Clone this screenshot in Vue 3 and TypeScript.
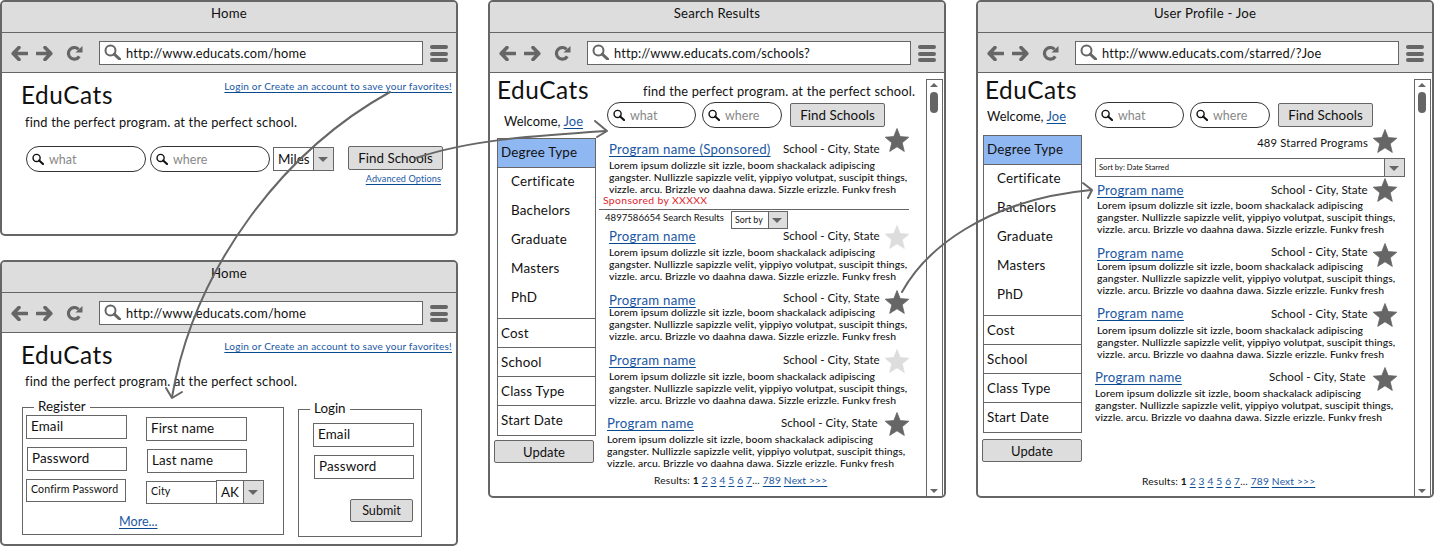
<script setup lang="ts">
interface Result { gap: number; dx: number; textGap: number; schoolDy: number; starDy: number; on: boolean }

const lorem = [
  'Lorem ipsum dolizzle sit izzle, boom shackalack adipiscing',
  'gangster. Nullizzle sapizzle velit, yippiyo volutpat, suscipit things,',
  'vizzle. arcu. Brizzle vo daahna dawa. Sizzle erizzle. Funky fresh',
]

const searchResults: Result[] = [
  { gap: -1, dx: 0, textGap: 2, schoolDy: 0, starDy: 1, on: false },
  { gap: 10, dx: 0, textGap: -2, schoolDy: -2, starDy: 2, on: true },
  { gap: 10, dx: 0, textGap: 2, schoolDy: 0, starDy: 1, on: false },
  { gap: 9, dx: -2, textGap: 2, schoolDy: 0, starDy: 1, on: true },
]
const starred: Result[] = [
  { gap: 5, dx: 0, textGap: 1, schoolDy: 0, starDy: 0, on: true },
  { gap: 10, dx: 0, textGap: -1, schoolDy: -1, starDy: 2, on: true },
  { gap: 9, dx: 0, textGap: 3, schoolDy: 1, starDy: 2, on: true },
  { gap: 9, dx: -2, textGap: 2, schoolDy: 0, starDy: 2, on: true },
]
const degrees = ['Certificate', 'Bachelors', 'Graduate', 'Masters', 'PhD']
const filters = ['Cost', 'School', 'Class Type', 'Start Date']
const pages = ['2', '3', '4', '5', '6', '7']

const homes = [
  { key: 'w1', url: 'http://www.educats.com/home' },
  { key: 'w2', url: 'http://www.educats.com/home' },
]
const lists = [
  { key: 'w3', title: 'Search Results', url: 'http://www.educats.com/schools?', profile: false, items: searchResults },
  { key: 'w4', title: 'User Profile - Joe', url: 'http://www.educats.com/starred/?Joe', profile: true, items: starred },
]
</script>

<template>
  <div class="canvas">
    <svg class="defs" width="0" height="0" aria-hidden="true">
      <defs>
        <symbol id="back" viewBox="0 0 17 15"><path d="M8 1.5 2.2 7.5 8 13.5M2.5 7.5H16" fill="none" stroke="#666" stroke-width="3.6" stroke-linejoin="round" stroke-linecap="round" /></symbol>
        <symbol id="fwd" viewBox="0 0 17 15"><path d="M9 1.5 14.8 7.5 9 13.5M14.5 7.5H1" fill="none" stroke="#666" stroke-width="3.6" stroke-linejoin="round" stroke-linecap="round" /></symbol>
        <symbol id="reload" viewBox="0 0 17 16"><path d="M13.6 11A6.2 6.2 0 1 1 12.8 3.6" fill="none" stroke="#666" stroke-width="3.4" /><path d="M9.5 7H17V0Z" fill="#666" /></symbol>
        <symbol id="mag" viewBox="0 0 17 16"><circle cx="6.5" cy="6.5" r="5" fill="none" stroke="currentColor" stroke-width="2" /><path d="M10.2 10.2 15.6 15" fill="none" stroke="currentColor" stroke-width="3" stroke-linecap="round" /></symbol>
        <symbol id="star" viewBox="0 0 24 24"><path d="M12 .5 15.2 8.6 23.8 9.2 17.2 14.8 19.3 23.4 12 18.8 4.7 23.4 6.8 14.8.2 9.2 8.8 8.6Z" fill="currentColor" stroke="currentColor" stroke-width=".8" stroke-linejoin="round" /></symbol>
      </defs>
    </svg>

    <section v-for="h in homes" :key="h.key" class="win" :class="h.key">
      <header class="title">Home</header>
      <div class="toolbar">
        <svg class="nav"><use href="#back" /></svg>
        <svg class="nav n2"><use href="#fwd" /></svg>
        <svg class="nav n3"><use href="#reload" /></svg>
        <div class="address"><svg class="addr-mag"><use href="#mag" /></svg><span>{{ h.url }}</span></div>
        <div class="burger"><i></i><i></i><i></i></div>
      </div>
      <div class="home">
        <div class="home-top">
          <h1 class="logo">EduCats</h1>
          <a class="link tiny">Login or Create an account to save your favorites!</a>
        </div>
        <p class="tag home-tag">find the perfect program. at the perfect school.</p>

        <div v-if="h.key === 'w1'" class="home-search">
          <div class="pill p120"><svg class="pill-mag"><use href="#mag" /></svg>what</div>
          <div class="pill p120 s3"><svg class="pill-mag"><use href="#mag" /></svg>where</div>
          <div class="select miles"><span>Miles</span><b class="drop"></b></div>
          <div class="find-col">
            <button class="btn find">Find Schools</button>
            <a class="link adv">Advanced Options</a>
          </div>
        </div>

        <div v-else class="forms">
          <div class="fieldset register">
            <span class="legend">Register</span>
            <div class="cols">
              <div class="col">
                <div class="field">Email</div>
                <div class="field f2">Password</div>
                <div class="field f3 small">Confirm Password</div>
              </div>
              <div class="col col-b">
                <div class="field">First name</div>
                <div class="field f2">Last name</div>
                <div class="city">
                  <div class="field small cityf">City</div>
                  <div class="select ak"><span>AK</span><b class="drop"></b></div>
                </div>
              </div>
            </div>
            <a class="link more">More...</a>
          </div>
          <div class="fieldset login">
            <span class="legend">Login</span>
            <div class="field">Email</div>
            <div class="field f2">Password</div>
            <button class="btn submit">Submit</button>
          </div>
        </div>
      </div>
    </section>

    <section v-for="l in lists" :key="l.key" class="win tall" :class="l.key">
      <header class="title">{{ l.title }}</header>
      <div class="toolbar">
        <svg class="nav"><use href="#back" /></svg>
        <svg class="nav n2"><use href="#fwd" /></svg>
        <svg class="nav n3"><use href="#reload" /></svg>
        <div class="address"><svg class="addr-mag"><use href="#mag" /></svg><span>{{ l.url }}</span></div>
        <div class="burger"><i></i><i></i><i></i></div>
      </div>
      <div class="body">
        <div class="page">
          <div class="page-top">
            <h1 class="logo">EduCats</h1>
            <p v-if="!l.profile" class="tag page-tag">find the perfect program. at the perfect school.</p>
          </div>
          <div class="columns">
            <aside class="side">
              <div class="welcome">Welcome, <a class="link">Joe</a></div>
              <div class="panel">
                <div class="panel-head">Degree Type</div>
                <div class="panel-list"><div v-for="d in degrees" :key="d" class="panel-item">{{ d }}</div></div>
                <div v-for="f in filters" :key="f" class="panel-row">{{ f }}</div>
              </div>
              <button class="btn update">Update</button>
            </aside>
            <main class="main">
              <div class="search">
                <div class="pill p89"><svg class="pill-mag"><use href="#mag" /></svg>what</div>
                <div class="pill p80"><svg class="pill-mag"><use href="#mag" /></svg>where</div>
                <button class="btn find">Find Schools</button>
              </div>

              <template v-if="!l.profile">
                <article class="result sponsored">
                  <div class="head">
                    <a class="link pname">Program name (Sponsored)</a>
                    <span class="school">School - City, State</span>
                    <svg class="star dark up"><use href="#star" /></svg>
                  </div>
                  <div class="lorem"><div v-for="t in lorem" :key="t">{{ t }}</div></div>
                </article>
                <div class="sponsor">Sponsored by XXXXX</div>
                <hr class="rule" />
                <div class="count">
                  <span>4897586654 Search Results</span>
                  <div class="select sort"><span>Sort by</span><b class="drop"></b></div>
                </div>
                <article class="result first-light">
                  <div class="head">
                    <a class="link pname">Program name</a>
                    <span class="school">School - City, State</span>
                    <svg class="star light"><use href="#star" /></svg>
                  </div>
                  <div class="lorem"><div v-for="t in lorem" :key="t">{{ t }}</div></div>
                </article>
              </template>
              <template v-else>
                <div class="starred-count"><span>489 Starred Programs</span><svg class="star dark"><use href="#star" /></svg></div>
                <div class="select wide"><span>Sort by: Date Starred</span><b class="drop"></b></div>
              </template>

              <article
                v-for="(r, i) in l.items.slice(l.profile ? 0 : 1)"
                :key="i"
                class="result"
                :style="{ marginTop: r.gap + 'px', marginLeft: 10 + r.dx + 'px' }"
              >
                <div class="head">
                  <a class="link pname">Program name</a>
                  <span class="school" :style="{ transform: `translateY(${r.schoolDy}px)` }">School - City, State</span>
                  <svg
                    class="star"
                    :class="r.on ? 'dark' : 'light'"
                    :style="{ transform: `translate(${-r.dx}px, ${r.starDy}px)` }"
                  ><use href="#star" /></svg>
                </div>
                <div class="lorem" :style="{ marginTop: r.textGap + 'px' }"><div v-for="t in lorem" :key="t">{{ t }}</div></div>
              </article>

              <div class="pager" :class="{ 'pager-low': l.profile }">
                Results: <b>1</b>
                <template v-for="p in pages" :key="p">{{ ' ' }}<a class="link">{{ p }}</a></template>... <a class="link">789</a> <a class="link">Next &gt;&gt;&gt;</a>
              </div>
            </main>
          </div>
        </div>
        <div class="scroll">
          <i class="up-tri"></i>
          <i class="thumb"></i>
          <i class="down-tri"></i>
        </div>
      </div>
    </section>

    <svg class="arrows" width="1434" height="546" viewBox="0 0 1434 546" aria-hidden="true">
      <g fill="none" stroke="#666" stroke-width="2" stroke-linecap="round" stroke-linejoin="round">
        <path d="M390 92C285 150 195 265 172 397" />
        <path d="M166 388 172 398 182 392" />
        <path d="M416 158C470 140 530 136 606 131" />
        <path d="M595 121 607 131 597 137" />
        <path d="M902 292C925 250 985 200 1091 190" />
        <path d="M1083 183 1092 190 1088 198" />
      </g>
    </svg>
  </div>
</template>

<style>
html, body { margin: 0; background: #fff; overflow: hidden; }
</style>

<style scoped>
.canvas { position: relative; width: 1434px; height: 546px; overflow: hidden; background: #fff; color: #111; font-family: Lato, "Open Sans", sans-serif; }
.defs { position: absolute; }
.arrows { position: absolute; left: 0; top: 0; pointer-events: none; }
h1, p { margin: 0; font-weight: 400; }

.win { position: absolute; box-sizing: border-box; width: 458px; display: flex; flex-direction: column; border: 2px solid #666; border-radius: 5px; overflow: hidden; background: #fff; }
.w1 { left: 0; top: 0; height: 236px; }
.w2 { left: 0; top: 260px; height: 286px; }
.w3 { left: 488px; top: 0; height: 498px; }
.w4 { left: 976px; top: 0; height: 498px; }

.title { box-sizing: border-box; height: 31px; background: #ddd; border-bottom: 1px solid #666; text-align: center; font-size: 13.2px; letter-spacing: .2px; line-height: 23px; }
.toolbar { box-sizing: border-box; height: 40px; flex: none; background: #ddd; border-bottom: 1px solid #666; display: flex; align-items: flex-start; padding: 8px 0 0 9px; }
.nav { width: 17px; height: 15px; margin-top: 5px; flex: none; }
.n2 { margin-left: 8px; }
.n3 { margin-left: 13px; }
.address { box-sizing: border-box; width: 324px; height: 24px; margin-left: 16px; flex: none; background: #fff; border: 1px solid #666; display: flex; align-items: center; font-size: 12.8px; letter-spacing: .15px; color: #111; }
.addr-mag { width: 17px; height: 16px; color: #666; margin: -2px 5px 0 4px; flex: none; }
.burger { width: 18px; margin: 4px 0 0 7px; display: flex; flex-direction: column; gap: 2.5px; }
.burger i { display: block; height: 4px; background: #666; border-radius: 2px; }

.logo { font-size: 24.4px; letter-spacing: .55px; line-height: 28px; white-space: nowrap; }
.tag { font-size: 12.8px; letter-spacing: .2px; white-space: nowrap; }
.link { color: #1a58a4; text-decoration: underline; text-decoration-color: #0a4a8e; text-underline-offset: 2px; }

.home-top { display: flex; justify-content: space-between; padding: 7px 4px 0 19px; height: 34px; box-sizing: border-box; }
.logo { margin-top: 1px; }
.tiny { font-size: 10.05px; line-height: 13px; letter-spacing: .2px; white-space: nowrap; }
.home-tag { margin: 7px 0 0 23px; line-height: 16px; }
.w2 .home-tag { margin-top: 6px; }
.home-search { display: flex; align-items: flex-start; margin: 16px 0 0 24px; }
.pill { box-sizing: border-box; height: 26px; border: 1px solid #333; border-radius: 13px; background: #fff; display: flex; align-items: center; color: #888; font-size: 12.5px; flex: none; }
.pill-mag { width: 12px; height: 12px; margin: 0 5px 0 5px; color: #111; flex: none; }
.p120 { width: 120px; }
.p89 { width: 89px; }
.p80 { width: 80px; margin-left: 6px; }
.s3 { margin-left: 4px; }
.select { box-sizing: border-box; display: flex; border: 1px solid #666; background: #fff; align-items: stretch; flex: none; }
.select span { flex: 1; min-width: 0; white-space: nowrap; }
.drop { flex: none; width: 19px; background: #ddd; border-left: 1px solid #666; position: relative; }
.drop::after { content: ""; position: absolute; left: 4px; top: calc(50% - 2px); border: 5px solid transparent; border-top: 5px solid #666; border-bottom: 0; }
.miles { width: 61px; height: 24px; margin: 1px 0 0 3px; font-size: 13.4px; line-height: 22px; padding-left: 4px; }
.find-col { margin-left: 14px; display: flex; flex-direction: column; align-items: flex-end; }
.btn { box-sizing: border-box; font: inherit; color: #111; background: #ddd; border: 1px solid #666; border-radius: 2px; padding: 0; }
.find { width: 95px; height: 24px; font-size: 13.4px; line-height: 20px; }
.adv { font-size: 9.1px; line-height: 13px; margin: 2px 2px 0 0; letter-spacing: .1px; }

.forms { display: flex; margin: 17px 0 0 20px; align-items: flex-start; }
.fieldset { position: relative; box-sizing: border-box; border: 1px solid #666; flex: none; }
.legend { position: absolute; top: -10px; left: 11px; padding: 0 4px; background: #fff; font-size: 13.4px; line-height: 16px; }
.register { width: 262px; height: 128px; padding: 7px 0 0 3px; margin-top: 1px; }
.login { width: 124px; height: 128px; margin: 3px 0 0 14px; padding: 13px 0 0 14px; }
.cols { display: flex; }
.col { width: 120px; }
.col-b { padding-top: 2px; }
.field { box-sizing: border-box; width: 101px; height: 24px; border: 1px solid #666; padding-left: 4px; font-size: 13.4px; line-height: 20px; letter-spacing: .15px; background: #fff; }
.f2 { margin: 8px 0 0 1px; width: 100px; }
.f3 { margin-top: 8px; width: 100px; height: 23px; }
.small { font-size: 10.6px; line-height: 19px; }
.city { display: flex; align-items: flex-start; margin-top: 8px; }
.cityf { width: 71px; height: 23px; margin-top: 0; }
.ak { width: 48px; height: 24px; margin: -1px 0 0 -1px; font-size: 13.4px; line-height: 22px; padding-left: 4px; }
.ak .drop, .miles .drop { border-radius: 0 2px 2px 0; }
.more { display: block; width: max-content; margin: 10px 0 0 93px; font-size: 12.6px; line-height: 16px; }
.submit { display: block; width: 63px; height: 23px; margin: 20px 0 0 37px; font-size: 12.6px; }

.body { flex: 1; display: flex; min-height: 0; }
.page { width: 434px; flex: none; }
.page-top { display: flex; height: 29px; padding-left: 7px; align-items: flex-start; }
.page-top .logo { line-height: 34px; margin: 0; }
.page-tag { margin-left: 54px; line-height: 36px; }
.columns { display: flex; }
.side { width: 109px; flex: none; display: flex; flex-direction: column; }
.welcome { font-size: 12.9px; line-height: 16px; margin: 11px 0 0 14px; white-space: nowrap; letter-spacing: .05px; }
.w4 .welcome { margin: 6px 0 0 9px; }
.panel { box-sizing: border-box; width: 99px; height: 298px; margin: 9px 0 0 7px; border: 1px solid #666; font-size: 13.4px; }
.w4 .panel { margin: 11px 0 0 5px; }
.panel-head { box-sizing: border-box; height: 29px; background: #8fb7f1; border-bottom: 1px solid #666; padding-left: 3px; line-height: 27px; letter-spacing: .2px; }
.panel-list { box-sizing: border-box; height: 152px; border-bottom: 1px solid #666; margin-top: -1px; padding-left: 13px; }
.panel-item { height: 29px; line-height: 29px; letter-spacing: .2px; }
.panel-row { box-sizing: border-box; height: 29px; line-height: 29px; padding-left: 3px; border-bottom: 1px solid #666; letter-spacing: .2px; }
.panel-row:last-child { border-bottom: 0; }
.update { width: 100px; height: 23px; margin: 4px 0 0 4px; font-size: 13px; }
.w4 .update { margin: 6px 0 0 4px; }

.main { width: 320px; flex: none; }
.search { display: flex; align-items: flex-start; margin-left: 8px; }
.search .find { margin: 1px 0 0 8px; }
.result { width: 300px; margin-left: 10px; }
.sponsored { margin-top: 13px; }
.first-light { margin-top: -1px; }
.head { display: flex; align-items: center; height: 16px; }
.pname { font-size: 13.2px; line-height: 16px; letter-spacing: .25px; white-space: nowrap; }
.school { margin-left: auto; width: 96px; flex: none; font-size: 11.6px; letter-spacing: .02px; line-height: 14px; white-space: nowrap; }
.star { width: 24px; height: 24px; margin: -4px 0 -4px 6px; flex: none; }
.dark { color: #666; }
.light { color: #ddd; }
.up { transform: translateY(-9px); }
.first-light .star { transform: translateY(1px); }
.lorem { height: 36px; margin-top: 2px; overflow: hidden; clip-path: inset(0 0 1.5px 0); font-size: 10.4px; line-height: 12px; letter-spacing: .07px; white-space: nowrap; font-weight: 500; }
.sponsor { margin: -1px 0 0 4px; font-size: 10.4px; line-height: 12px; color: #e01d2e; letter-spacing: .35px; }
.rule { margin: 3px 0 0 0; width: 310px; height: 1px; border: 0; background: #666; }
.count { display: flex; align-items: flex-start; margin: 1px 0 0 6px; font-size: 9.6px; line-height: 14px; white-space: nowrap; }
.count > span { width: 126px; }
.sort { width: 57px; height: 18px; font-size: 8.8px; line-height: 16px; padding-left: 3px; }
.sort .drop { width: 18px; }
.sort .drop::after { left: 3px; }
.starred-count { display: flex; align-items: center; justify-content: flex-end; width: 310px; height: 24px; margin-top: 1px; font-size: 11.2px; line-height: 14px; letter-spacing: .2px; }
.starred-count .star { margin: -4px 0 -4px 5px; }
.starred-count > span { margin-top: 3px; }
.wide { width: 310px; height: 19px; margin: 5px 0 0 8px; font-size: 7.6px; line-height: 17px; padding-left: 3px; }
.pager { margin: 5px 0 0 55px; font-size: 10.2px; line-height: 12px; white-space: nowrap; letter-spacing: .18px; }
.pager-low { margin-top: 52px; }

.scroll { position: relative; box-sizing: border-box; width: 17px; margin: 6px 0 0 2px; flex: none; border: 1px solid #666; border-bottom: 0; }
.thumb { position: absolute; left: 3px; top: 12px; width: 8px; height: 21px; background: #666; border-radius: 4px; }
.up-tri { position: absolute; left: 3px; top: 3px; border: 4px solid transparent; border-bottom: 4px solid #666; border-top: 0; }
.down-tri { position: absolute; left: 3px; bottom: 3px; border: 4px solid transparent; border-top: 4px solid #666; border-bottom: 0; }
</style>
